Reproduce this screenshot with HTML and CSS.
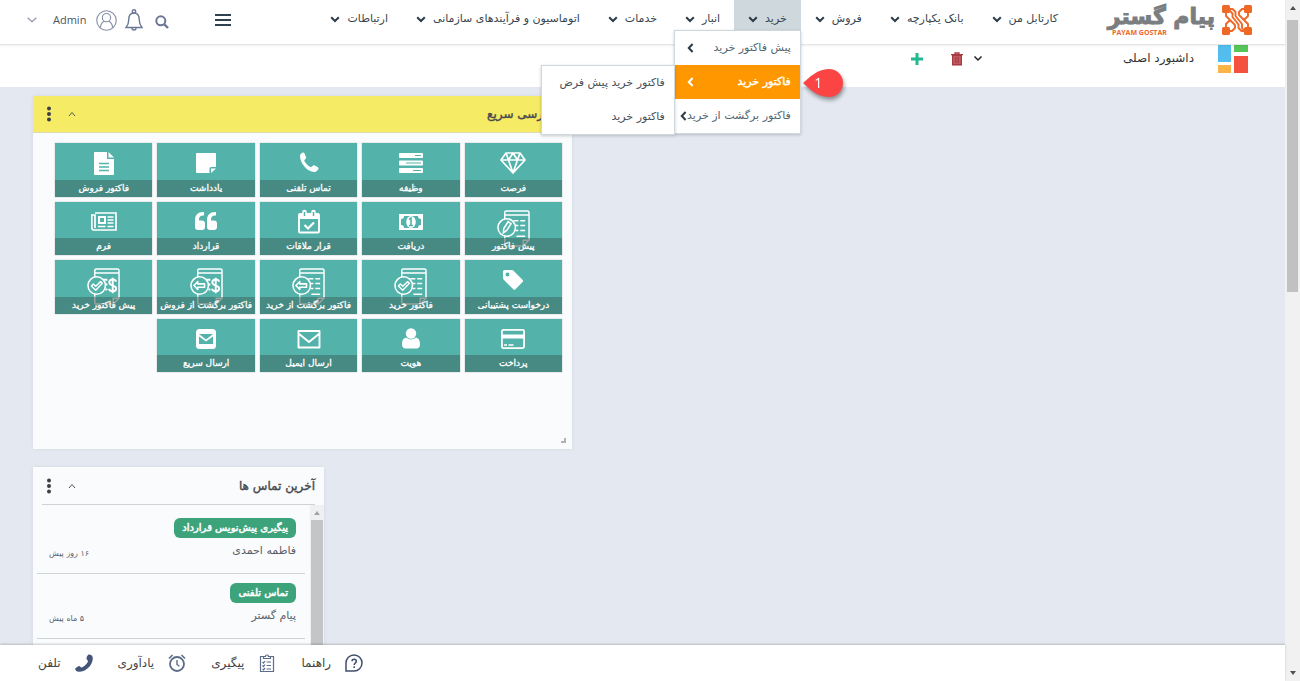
FILE: index.html
```html
<!DOCTYPE html>
<html lang="fa" dir="rtl">
<head>
<meta charset="utf-8">
<title>پیام گستر</title>
<link rel="stylesheet" href="styles.css">
</head>
<body>
<svg class="defs" aria-hidden="true">
  <symbol id="down" viewBox="0 0 10 7"><path d="M1.2 1.2 5 5l3.800-3.800" fill="none" stroke="currentColor" stroke-width="2"/></symbol>
  <symbol id="left" viewBox="0 0 7 10"><path d="M5.600 1 1.800 5l3.800 4" fill="none" stroke="currentColor" stroke-width="2"/></symbol>
  <symbol id="thin-up" viewBox="0 0 8 6"><path d="M1 5l3-3.500L7 5" fill="none" stroke="currentColor" stroke-width="1"/></symbol>
  <symbol id="dots" viewBox="0 0 4 16"><g fill="currentColor"><circle cx="2" cy="2.500" r="2"/><circle cx="2" cy="8" r="2"/><circle cx="2" cy="13.500" r="2"/></g></symbol>
  <symbol id="i-invoice" viewBox="0 0 26 26"><path d="M4 2h12v7h7v15a1 1 0 0 1-1 1H4a1 1 0 0 1-1-1V3a1 1 0 0 1 1-1zM17.500 2 23 7.500h-5.500z" fill="#fff"/><path d="M8 13.500h10M8 17h10M8 20.500h10" stroke="#53b3ab" stroke-width="1.500"/></symbol>
  <symbol id="i-note" viewBox="0 0 26 26"><path d="M3 4a1 1 0 0 1 1-1h18a1 1 0 0 1 1 1v13h-5a1.500 1.500 0 0 0-1.500 1.500V23H4a1 1 0 0 1-1-1zM18 18.500h5L18 23z" fill="#fff"/></symbol>
  <symbol id="i-phone" viewBox="0 0 26 26"><path d="M4 6c0-2 2-3.500 3.500-3.500 1 0 1.800 3 2.600 4.700.5 1.300-1.800 2-1.800 3.200 0 1.600 5 6.600 6.700 6.600 1.200 0 2-2.200 3.200-1.700 2 .9 4.300 1.900 4.300 3 0 2-2.300 3.700-4.300 3.700C11.500 22 4 13.500 4 6z" fill="#fff"/></symbol>
  <symbol id="i-server" viewBox="0 0 26 26"><g fill="#fff"><rect x="1" y="3" width="24" height="5" rx="1"/><rect x="1" y="10.500" width="24" height="5" rx="1"/><rect x="1" y="18" width="24" height="5" rx="1"/></g><path d="M17 5.500h6M8 13h15M15 20.500h8" stroke="#53b3ab" stroke-width="1.200"/></symbol>
  <symbol id="i-diamond" viewBox="0 0 26 26"><path d="M6 3h14l5 7-12 13L1 10zM1 10h24M6 3l2.500 7L13 23l4.500-13L20 3M8.500 10 13 3l4.500 7" fill="none" stroke="#fff" stroke-width="1.700" stroke-linejoin="round"/></symbol>
  <symbol id="i-form" viewBox="0 0 26 26"><path d="M4 4h21v17H3a2.200 2.200 0 0 1-2.200-2.200V6H4v13" fill="none" stroke="#fff" stroke-width="1.700"/><path d="M8 8h6v6H8z" fill="none" stroke="#fff" stroke-width="2"/><path d="M16.500 8h6M16.500 11h6M16.500 14h6M7 17.500h7.500M16.500 17.500h6" stroke="#fff" stroke-width="1.700"/></symbol>
  <symbol id="i-quote" viewBox="0 0 26 26"><path d="M2 11c0-5 3-8 8-8h1v3.500h-1C7.500 6.500 6 8 6 10.500v1h3a3 3 0 0 1 3 3V18a3 3 0 0 1-3 3H5a3 3 0 0 1-3-3zM14 11c0-5 3-8 8-8h1v3.500h-1c-2.500 0-4 1.500-4 4v1h3a3 3 0 0 1 3 3V18a3 3 0 0 1-3 3h-4a3 3 0 0 1-3-3z" fill="#fff"/></symbol>
  <symbol id="i-calendar" viewBox="0 0 26 26"><path d="M4 5h18a1 1 0 0 1 1 1v16.500a1 1 0 0 1-1 1H4a1 1 0 0 1-1-1V6a1 1 0 0 1 1-1z" fill="none" stroke="#fff" stroke-width="1.900"/><path d="M3 5h20v5H3z" fill="#fff"/><path d="M8.500 3v4M17.500 3v4" stroke="#fff" stroke-width="4.600" stroke-linecap="round"/><path d="M8.500 3v4M17.500 3v4" stroke="#53b3ab" stroke-width="1.500"/><path d="m8.500 16 3.500 3.500 6-6" fill="none" stroke="#fff" stroke-width="2.200"/></symbol>
  <symbol id="i-money" viewBox="0 0 26 26"><path d="M1 5h24v16H1z" fill="#fff"/><path d="M6 7h14a3 3 0 0 0 3 3v6a3 3 0 0 0-3 3H6a3 3 0 0 0-3-3v-6a3 3 0 0 0 3-3z" fill="#53b3ab"/><ellipse cx="13" cy="13" rx="4.800" ry="6" fill="#fff"/><path d="m11 10.500 2-1.500v7M11 16.500h4" fill="none" stroke="#53b3ab" stroke-width="1.600"/></symbol>
  <symbol id="i-tag" viewBox="0 0 26 26"><path d="M3 4.500A1.500 1.500 0 0 1 4.500 3h7c1 0 1.500.3 2 .8l9 9c.8.800.8 1.500 0 2.200l-7 7.200c-.8.800-1.500.8-2.200 0L4 13c-.6-.6-1-1.200-1-2zM7.500 5.500a2 2 0 1 0 0 4 2 2 0 0 0 0-4z" fill="#fff" fill-rule="evenodd"/></symbol>
  <symbol id="i-card" viewBox="0 0 26 26"><rect x="1.900" y="3.900" width="22.200" height="18.200" rx="1.500" fill="none" stroke="#fff" stroke-width="1.800"/><path d="M1 8.500h24v4H1z" fill="#fff"/><path d="M4 19h3M8.500 19h5" stroke="#fff" stroke-width="1.500"/></symbol>
  <symbol id="i-user" viewBox="0 0 26 26"><circle cx="13" cy="7.500" r="5.200" fill="#fff"/><path d="M4 18.500c0-4 1.500-6.700 4.500-6.700 2.500 2.200 6.500 2.200 9 0 3 0 4.500 2.700 4.500 6.700 0 2.500-1.500 4-3.500 4h-11c-2 0-3.500-1.500-3.500-4z" fill="#fff"/></symbol>
  <symbol id="i-mail" viewBox="0 0 26 26"><path d="M2.500 5h21v16.500h-21zM2.500 7.500 13 16l10.500-8.500" fill="none" stroke="#fff" stroke-width="1.900" stroke-linejoin="round"/></symbol>
  <symbol id="i-quick" viewBox="0 0 26 26"><rect x="3" y="3" width="20" height="20" rx="3.500" fill="#fff"/><path d="M6 8h14l-7 5.500zM6 10.500l7 5 7-5V18H6z" fill="#53b3ab"/></symbol>
  <symbol id="doc" viewBox="0 0 34 38"><path d="M8 12V2.500A1.500 1.500 0 0 1 9.500 1h22A1.500 1.500 0 0 1 33 2.500V30M8 5h25M8 24v5" fill="none" stroke="#fff" stroke-width="1.500"/><path d="M8 29v6.500A1.500 1.500 0 0 0 9.500 37H27l6-6v-2M27 37v-6h6" fill="none" stroke="#f2e6e4" stroke-width="1.500"/></symbol>
  <symbol id="lines" viewBox="0 0 34 38"><path d="M17 11h5M24 11h5M19 16h3M24 16h5M19 21h3M24 21h5M20 27h9" stroke="#fff" stroke-width="1.500"/></symbol>
  <symbol id="lens" viewBox="0 0 34 38"><circle cx="10" cy="18" r="9" fill="#53b3ab" stroke="#fff" stroke-width="1.600"/></symbol>
  <symbol id="dollar" viewBox="0 0 34 38"><path d="M30 14c-1-3-7-3-7 1s7 2.500 7 6-6 4-7.500.5M26.500 10v16M17 12h4M19 17h2M19 22h2" fill="none" stroke="#fff" stroke-width="2"/></symbol>
  <symbol id="check" viewBox="0 0 34 38"><path d="m4.500 18.500 2-2 2.500 2.300 5-4.800 1.800 1.700L9 22.800z" fill="none" stroke="#fff" stroke-width="1.500" stroke-linejoin="round"/></symbol>
  <symbol id="back" viewBox="0 0 34 38"><path d="m4 18 4-4v2.300h7v3.500H8V22z" fill="none" stroke="#fff" stroke-width="1.600" stroke-linejoin="round"/></symbol>
  <symbol id="pen" viewBox="0 0 34 38"><path d="m6.500 23.500.5-4.500 4.500-7 3 2-4.500 7z" fill="none" stroke="#fff" stroke-width="1.600"/></symbol>
</svg>

<div class="app">
  <header class="header">
    <a class="brand" href="#">
      <svg class="brand-mark" viewBox="0 0 30 30" aria-hidden="true"><g fill="none" stroke="#ee6826" stroke-width="1.900" stroke-linejoin="round"><path d="M8 4h2.500L13.500 7v4l6.500 8v4l2.500 3M4 8v3l4 4-4 4v4M26 8v3l-4 4 4 4v4M22 4h-2l-3 3v3l5 5M8 26h2l3-3v-3l-5-5M6 6h2l2.500 2.500V12l6 7.500v3.500l3 3H23"/></g><g fill="#ee6826"><rect width="8" height="8" rx="1.500"/><rect x="22" width="8" height="8" rx="1.500"/><rect y="22" width="8" height="8" rx="1.500"/><rect x="22" y="22" width="8" height="8" rx="1.500"/></g></svg>
      <span class="brand-words"><span class="brand-fa">پیام گستر</span><span class="brand-en" dir="ltr">PAYAM GOSTAR</span></span>
    </a>
    <nav class="nav">
      <div class="nav-item"><button>کارتابل من<svg><use href="#down"/></svg></button></div>
      <div class="nav-item"><button>بانک یکپارچه<svg><use href="#down"/></svg></button></div>
      <div class="nav-item"><button>فروش<svg><use href="#down"/></svg></button></div>
      <div class="nav-item open">
        <button aria-expanded="true">خرید<svg><use href="#down"/></svg></button>
        <div class="menu">
          <a href="#">پیش فاکتور خرید<svg><use href="#left"/></svg></a>
          <a href="#" class="active">فاکتور خرید<svg><use href="#left"/></svg></a>
          <a href="#">فاکتور برگشت از خرید<svg><use href="#left"/></svg></a>
          <div class="submenu">
            <a href="#">فاکتور خرید پیش فرض</a>
            <a href="#">فاکتور خرید</a>
          </div>
          <div class="marker"><svg viewBox="0 0 40 28" aria-hidden="true"><path d="M0 14C6 9 14 0 26 0a14 14 0 0 1 0 28C14 28 6 19 0 14z" fill="#fb4444"/></svg><span>1</span></div>
        </div>
      </div>
      <div class="nav-item"><button>انبار<svg><use href="#down"/></svg></button></div>
      <div class="nav-item"><button>خدمات<svg><use href="#down"/></svg></button></div>
      <div class="nav-item"><button>اتوماسیون و فرآیندهای سازمانی<svg><use href="#down"/></svg></button></div>
      <div class="nav-item"><button>ارتباطات<svg><use href="#down"/></svg></button></div>
    </nav>
    <div class="tools">
      <button class="burger" aria-label="منو"><svg viewBox="0 0 16 12"><path d="M0 1h16M0 6h16M0 11h16" stroke="#2d4150" stroke-width="1.800"/></svg></button>
      <button class="search" aria-label="جستجو"><svg viewBox="0 0 14 14"><circle cx="5.800" cy="5.800" r="4.500" fill="none" stroke="#6b7797" stroke-width="2"/><path d="m9 9 4 4" stroke="#6b7797" stroke-width="2.400"/></svg></button>
      <button class="bell" aria-label="اعلان‌ها"><svg viewBox="0 0 18 22"><g fill="none" stroke="#6b7797" stroke-width="1.400"><circle cx="9" cy="2.500" r="1.700"/><path d="M9 4C5 4 3.800 7 3.800 10.500S3 16 1 18.500h16c-2-2.500-2.800-4.500-2.800-8S13 4 9 4zM7 19a2 2 0 0 0 4 0"/></g></svg></button>
      <button class="account"><svg class="avatar" viewBox="0 0 22 22"><g fill="none" stroke="#8791a8" stroke-width="1.200"><circle cx="11" cy="11" r="10.200"/><circle cx="11" cy="8" r="4.300"/><path d="M4.500 18.500c.5-4 2-6 4.500-6.700M17.500 18.500c-.5-4-2-6-4.500-6.700"/></g></svg><span>Admin</span><svg class="caret" viewBox="0 0 10 6"><path d="m.7.7 4.300 4 4.300-4" fill="none" stroke="#8d95ab" stroke-width="1.200"/></svg></button>
    </div>
  </header>

  <section class="titlebar">
    <svg class="dash-icon" viewBox="0 0 30 28" aria-hidden="true"><path d="M0 0h13v17H0z" fill="#53bdee"/><path d="M16 0h14v7H16z" fill="#55c657"/><path d="M0 20h13v8H0z" fill="#fbb448"/><path d="M16 11h14v17H16z" fill="#f4523f"/></svg>
    <h1>داشبورد اصلی</h1>
    <div class="title-actions">
      <button aria-label="بیشتر"><svg class="a-down" viewBox="0 0 10 7"><path d="M1.500 1.500 5 5l3.500-3.500" fill="none" stroke="#222" stroke-width="1.500"/></svg></button>
      <button aria-label="حذف"><svg class="a-trash" viewBox="0 0 12 14"><path d="M0 2.700h12M4 2.500V1h4v1.500" fill="none" stroke="#a83a42" stroke-width="1.300"/><path d="M1.700 3.500h8.600v9.300H1.700z" fill="#c9666a" stroke="#a83a42" stroke-width="1.400"/><path d="M4.300 5v6.500M6 5v6.500M7.700 5v6.500" stroke="#9c2f38" stroke-width=".8"/></svg></button>
      <button class="add" aria-label="افزودن"><svg class="a-plus" viewBox="0 0 12 12"><path d="M6 0v12M0 6h12" stroke="#22b890" stroke-width="3"/></svg></button>
    </div>
  </section>

  <main class="board">
    <section class="widget quick">
      <header class="widget-head"><h2>دسترسی سریع</h2><button aria-label="بستن"><svg class="fold"><use href="#thin-up"/></svg></button><button aria-label="گزینه‌ها"><svg class="dots"><use href="#dots"/></svg></button></header>
      <div class="tiles">
        <button class="tile"><svg><use href="#i-diamond"/></svg><span>فرصت</span></button>
        <button class="tile"><svg><use href="#i-server"/></svg><span>وظیفه</span></button>
        <button class="tile"><svg><use href="#i-phone"/></svg><span>تماس تلفنی</span></button>
        <button class="tile"><svg><use href="#i-note"/></svg><span>یادداشت</span></button>
        <button class="tile"><svg><use href="#i-invoice"/></svg><span>فاکتور فروش</span></button>
        <button class="tile big"><svg><use href="#doc"/><use href="#lines"/><use href="#lens"/><use href="#pen"/></svg><span>پیش فاکتور</span></button>
        <button class="tile"><svg><use href="#i-money"/></svg><span>دریافت</span></button>
        <button class="tile"><svg><use href="#i-calendar"/></svg><span>قرار ملاقات</span></button>
        <button class="tile"><svg><use href="#i-quote"/></svg><span>قرارداد</span></button>
        <button class="tile"><svg><use href="#i-form"/></svg><span>فرم</span></button>
        <button class="tile"><svg><use href="#i-tag"/></svg><span>درخواست پشتیبانی</span></button>
        <button class="tile big"><svg><use href="#doc"/><use href="#lines"/><use href="#lens"/><use href="#check"/></svg><span>فاکتور خرید</span></button>
        <button class="tile big"><svg><use href="#doc"/><use href="#lines"/><use href="#lens"/><use href="#back"/></svg><span>فاکتور برگشت از خرید</span></button>
        <button class="tile big"><svg><use href="#doc"/><use href="#dollar"/><use href="#lens"/><use href="#back"/></svg><span>فاکتور برگشت از فروش</span></button>
        <button class="tile big"><svg><use href="#doc"/><use href="#dollar"/><use href="#lens"/><use href="#check"/></svg><span>پیش فاکتور خرید</span></button>
        <button class="tile"><svg><use href="#i-card"/></svg><span>پرداخت</span></button>
        <button class="tile"><svg><use href="#i-user"/></svg><span>هویت</span></button>
        <button class="tile"><svg><use href="#i-mail"/></svg><span>ارسال ایمیل</span></button>
        <button class="tile"><svg><use href="#i-quick"/></svg><span>ارسال سریع</span></button>
      </div>
      <i class="grip"></i>
    </section>

    <section class="widget calls">
      <header class="widget-head"><h2>آخرین تماس ها</h2><button aria-label="بستن"><svg class="fold"><use href="#thin-up"/></svg></button><button aria-label="گزینه‌ها"><svg class="dots"><use href="#dots"/></svg></button></header>
      <div class="calls-body">
        <div class="mini-scroll"><svg viewBox="0 0 6 4"><path d="M0 4l3-4 3 4z" fill="#a3a3a3"/></svg><i></i></div>
        <ul class="call-list">
          <li><a class="badge" href="#">پیگیری پیش‌نویس قرارداد</a><div class="call-meta"><span>فاطمه احمدی</span><time>۱۶ روز پیش</time></div></li>
          <li><a class="badge" href="#">تماس تلفنی</a><div class="call-meta"><span>پیام گستر</span><time>۵ ماه پیش</time></div></li>
        </ul>
      </div>
    </section>
  </main>

  <footer class="footer">
    <button><svg viewBox="0 0 18 18"><path d="M1 17V9a8 8 0 1 1 8 8z" fill="none" stroke="#3f4f6b" stroke-width="1.500"/><path d="M7 7.300c0-3 4.300-2.600 4.300 0C11.300 9 9.200 9 9.200 11M9.200 12.300v1.600" fill="none" stroke="#3f4f6b" stroke-width="1.600"/></svg><span>راهنما</span></button>
    <button><svg viewBox="0 0 18 18"><g fill="none" stroke="#5d6c89" stroke-width="1.200"><path d="M5.500 2.500h-3v15h13v-15h-3"/><path d="M5.500 4.500v-2h2a1.500 1.500 0 0 1 3 0h2v2zM4.500 8 5.500 9 7 7M8.500 8H13M4.500 11.500l1 1 1.500-2M8.500 11.500H13M4.500 15l1 .8L7 14M8.500 15H13"/></g></svg><span>پیگیری</span></button>
    <button><svg viewBox="0 0 18 18"><g fill="none" stroke="#5d6c89" stroke-width="1.800"><circle cx="9" cy="10" r="7"/><path d="M9 6v4.500l2.500 1.800" stroke-width="1.400"/><path d="M1 4.500 4.500 1M17 4.500 13.500 1" stroke-width="1.600"/></g></svg><span>یادآوری</span></button>
    <button><svg viewBox="0 0 18 18"><path d="M13.500.5c1 0 4 0 4.300 3.500C18 11 11 17.800 4 17.800 1.500 17.800 0 16 .2 14.500c1-1 3-2.500 4-2.500s1.300 1.500 2.300 1.500C9 13 13 9 13 7c0-1-1.500-1-1.500-2.500S12.500 1 13.500.5z" fill="#44557a"/></svg><span>تلفن</span></button>
  </footer>
</div>

<div class="scrollbar" aria-hidden="true"><svg viewBox="0 0 6 4"><path d="M0 4l3-4 3 4z" fill="#505050"/></svg><i></i><svg viewBox="0 0 6 4"><path d="M0 0l3 4 3-4z" fill="#505050"/></svg></div>
</body>
</html>
```
FILE: styles.css
```css
* { box-sizing: border-box; }
body {
  margin: 0;
  height: 100vh;
  display: flex;
  flex-direction: row-reverse;
  overflow: hidden;
  font-family: "DejaVu Sans", sans-serif;
  font-size: 11px;
  line-height: 16px;
  color: #4b5563;
}
button {
  border: 0;
  padding: 0;
  background: none;
  font: inherit;
  color: inherit;
  display: flex;
  align-items: center;
}
a { color: inherit; text-decoration: none; }
h1, h2, ul { margin: 0; padding: 0; list-style: none; }
svg { display: block; flex: none; }
.defs { position: absolute; width: 0; height: 0; }
.app { flex: 1; min-width: 0; display: flex; flex-direction: column; }

.header {
  display: flex;
  height: 45px;
  flex: none;
  padding: 0 33px 0 27px;
  background: #fff;
  border-bottom: 1px solid #e3e4e6;
  box-shadow: 0 1px 2px #0001;
  position: relative;
  z-index: 2;
}
.brand { display: flex; gap: 7px; padding-top: 5px; }
.brand-mark { width: 30px; height: 30px; }
.brand-words { width: 110px; display: flex; flex-direction: column; white-space: nowrap; }
.brand-fa { font-size: 22px; font-weight: 700; line-height: 24px; color: #7b7e80; -webkit-text-stroke: 1px #7b7e80; }
.brand-en { font: 700 7px/8px "Open Sans", sans-serif; color: #ee6826; padding-left: 7px; }
.nav { display: flex; align-items: flex-start; margin-right: 33px; }
.nav-item { position: relative; }
.nav-item > button {
  gap: 7px;
  height: 30px;
  padding: 8px 14px 0;
  white-space: nowrap;
  color: #36454f;
}
.nav-item > button svg { width: 10px; height: 7px; color: #2b3c47; }
.nav-item.open > button { background: #cfd8dc; }

.menu, .submenu {
  position: absolute;
  background: #fff;
  border: 1px solid #cfd8dc;
  box-shadow: 0 1px 3px #0003;
}
.menu { top: 30px; right: 0; width: 127px; }
.menu a {
  display: flex;
  align-items: center;
  justify-content: space-between;
  height: 34px;
  padding: 0 9px 0 12px;
  white-space: nowrap;
  color: #55656f;
}
.menu a svg { width: 7px; height: 10px; color: #2b3c47; }
.menu .active, .menu .active svg { background: #ff9800; color: #fff; }
.menu .active { -webkit-text-stroke: 0.4px; }
.submenu { top: 34px; right: 100%; width: 134px; }
.submenu a { color: #4a4f54; }
.marker {
  position: absolute;
  top: 38px;
  left: 100%;
  width: 40px;
  margin-left: 3px;
  filter: drop-shadow(1px 3px 2px #0006);
}
.marker span {
  position: absolute;
  inset: 0 9px 0 0;
  text-align: center;
  font: 14px/28px "Open Sans", sans-serif;
  color: #fff;
}

.tools { display: flex; align-items: center; margin-right: auto; padding-bottom: 4px; }
.burger svg { width: 16px; height: 12px; }
.search { margin-right: 46px; padding-top: 4px; }
.search svg { width: 14px; height: 14px; }
.bell { margin-right: 12px; }
.bell svg { width: 18px; height: 22px; }
.account { margin-right: 8px; gap: 10px; font: 11px/16px "Open Sans", sans-serif; }
.avatar { width: 21px; height: 21px; }
.caret { width: 10px; height: 6px; margin-right: 6px; }

.titlebar {
  flex: none;
  height: 42px;
  display: flex;
  padding: 0 37px 0 0;
  background: #fff;
}
.dash-icon { width: 30px; height: 28px; }
.titlebar h1 { margin-right: 24px; padding-top: 4px; font-size: 12px; font-weight: 400; color: #333; line-height: 18px; }
.title-actions { display: flex; align-items: center; gap: 10px; height: 27px; margin-right: 140px; }
.a-down { width: 10px; height: 7px; }
.a-trash { width: 12px; height: 14px; }
.add { margin-right: 18px; }
.a-plus { width: 12px; height: 12px; }

.board {
  flex: 1;
  min-height: 0;
  overflow: hidden;
  display: flex;
  flex-direction: column;
  align-items: flex-end;
  gap: 18px;
  padding: 9px 33px 0;
  background: #e4e9f1;
}
.widget { flex: none; background: #fafbfd; box-shadow: 0 0 4px #00000012; position: relative; }
.widget-head { display: flex; align-items: center; height: 37px; padding: 0 9px 0 14px; gap: 17px; }
.widget-head h2 { margin-left: auto; font-size: 12px; font-weight: 400; color: #46494d; -webkit-text-stroke: 0.4px; }
.fold { width: 8px; height: 6px; color: #555; }
.dots { width: 4px; height: 16px; color: #3c3f43; }
.quick { width: 539px; height: 353px; }
.quick .widget-head { background: #f5eb64; border-bottom: 1px solid #dedcb0; }
.tiles {
  display: grid;
  grid-template-columns: repeat(5, 1fr);
  grid-template-rows: repeat(4, 1fr);
  gap: 5px;
  height: 229px;
  margin: 10px 10px 0 22px;
}
.tile {
  flex-direction: column;
  justify-content: space-between;
  padding-top: 7px;
  background: #53b3ab;
  box-shadow: 0 0 1px #0006;
  color: #fff;
  min-width: 0;
}
.tile svg { width: 26px; height: 26px; }
.tile.big svg { width: 33px; height: 37px; margin: 1px 0 -14px; }
.tile span {
  position: relative;
  width: 100%;
  background: #3b615b80;
  font-size: 9px;
  line-height: 17px;
  white-space: nowrap;
  -webkit-text-stroke: 0.3px;
}
.grip {
  position: absolute;
  right: 6px;
  bottom: 6px;
  width: 5px;
  height: 5px;
  border: solid #b0b2b5;
  border-width: 0 2px 2px 0;
}

.calls { width: 291px; height: 353px; }
.calls .widget-head::after {
  content: "";
  position: absolute;
  top: 37px;
  left: 9px;
  right: 9px;
  border-top: 1px solid #cfd2d6;
}
.calls-body { display: flex; height: 315px; margin-top: 1px; }
.mini-scroll { width: 14px; background: #eff0f1; display: flex; flex-direction: column; align-items: center; padding: 6px 1px 0; gap: 5px; }
.mini-scroll svg { width: 6px; height: 4px; }
.mini-scroll i { flex: 1; width: 100%; background: #c4c5c7; }
.call-list { flex: 1; padding: 4px 5px 0 4px; }
.call-list li { height: 65px; padding: 9px 9px 0 12px; border-bottom: 1px solid #cfd2d6; }
.badge {
  display: inline-block;
  padding: 0 8px;
  border-radius: 6px;
  background: #3ca37b;
  color: #fff;
  font-size: 10px;
  line-height: 20px;
  -webkit-text-stroke: 0.5px;
}
.call-meta { display: flex; justify-content: space-between; padding-top: 5px; color: #5b6068; }
.call-meta time { font-size: 8px; line-height: 22px; }

.footer {
  flex: none;
  height: 36px;
  display: flex;
  justify-content: flex-end;
  gap: 25px;
  padding-left: 38px;
  background: #fff;
  box-shadow: 0 -1px 2px #0003;
  position: relative;
  color: #444;
  font-size: 12px;
}
.footer button { gap: 14px; }
.footer svg { width: 18px; height: 18px; }

.scrollbar {
  width: 15px;
  background: #f1f1f1;
  display: flex;
  flex-direction: column;
  align-items: center;
  padding: 6px 0;
}
.scrollbar svg { width: 6px; height: 4px; }
.scrollbar i { width: 11px; height: 40vh; margin: 10px 0 auto; background: #c1c1c1; }
```
